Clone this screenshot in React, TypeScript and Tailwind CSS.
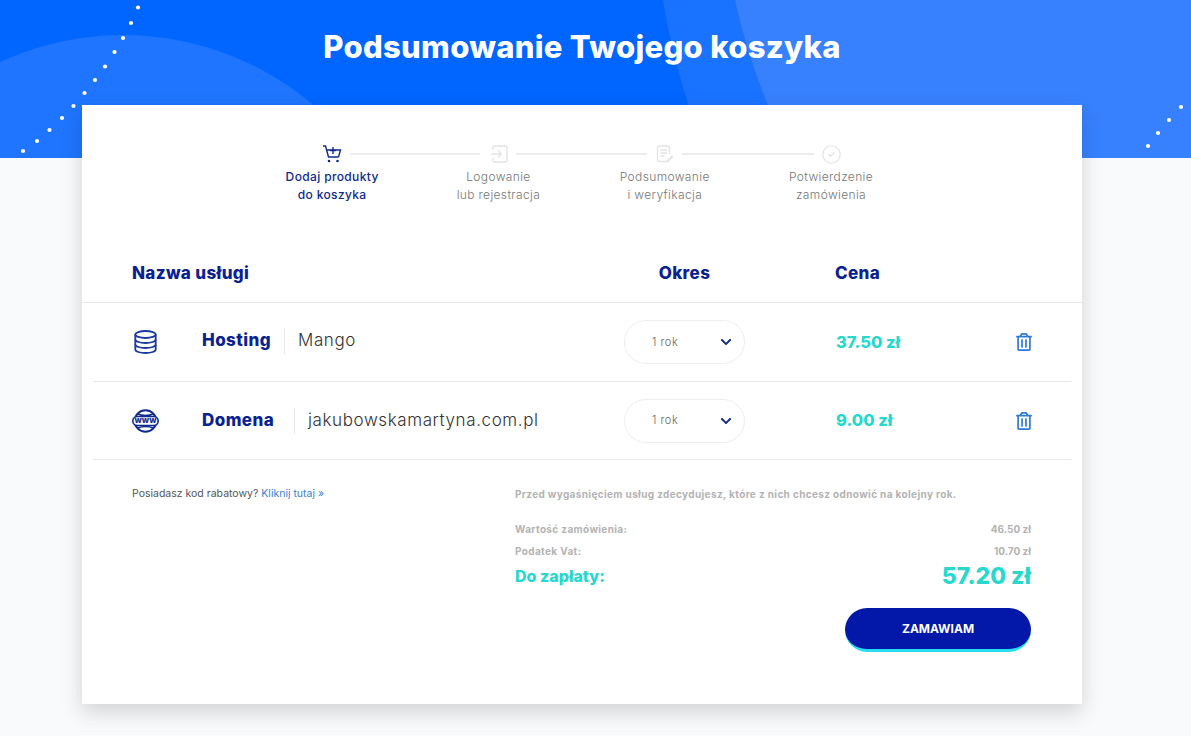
import { CircleCheck } from "lucide-react";
import { FaChevronDown, FaRegTrashAlt } from "react-icons/fa";

const font = "font-['Inter','Liberation_Sans',sans-serif]";

function CartIcon() {
  return (
    <svg width="20" height="18" viewBox="0 0 20 18" fill="none" stroke="#0f2a8c" strokeWidth="1.400">
      <path d="M1 1h2.500l3 11h10" />
      <path d="M4.500 5h14l-2 7" />
      <path d="M11 2v7M8 5.500h6" />
      <circle cx="7" cy="16" r="1.300" fill="#0f2a8c" stroke="none" />
      <circle cx="15.500" cy="16" r="1.300" fill="#0f2a8c" stroke="none" />
    </svg>
  );
}

function LoginIcon() {
  return (
    <svg width="18" height="18" viewBox="0 0 18 18" fill="none" stroke="#e3e4e6" strokeWidth="1.400">
      <path d="M3 5V2.500A1.500 1.500 0 0 1 4.500 1h11A1.500 1.500 0 0 1 17 2.500v13a1.500 1.500 0 0 1-1.500 1.500h-11A1.500 1.500 0 0 1 3 15.500V13" />
      <path d="M1 9h10M8 5.500 11.500 9 8 12.500" />
    </svg>
  );
}

function DocIcon() {
  return (
    <svg width="18" height="18" viewBox="0 0 18 18" fill="none" stroke="#e3e4e6" strokeWidth="1.400">
      <path d="M12 16.500H3A1.500 1.500 0 0 1 1.500 15V2.500A1.500 1.500 0 0 1 3 1h9a1.500 1.500 0 0 1 1.500 1.500V9" />
      <path d="M4.500 5h6.500M4.500 8h6.500M4.500 11h4" />
      <path d="M11.500 16.500 16.500 11" strokeWidth="2.400" />
    </svg>
  );
}

function DbIcon() {
  return (
    <svg className="ml-[2px]" width="23" height="24" viewBox="0 0 23 24" fill="none" stroke="#1c3a9e" strokeWidth="1.800">
      <ellipse cx="11.500" cy="4.500" rx="10.200" ry="3.500" />
      <path d="M1.300 4.500v15c0 2 4.600 3.500 10.200 3.500s10.200-1.500 10.200-3.500v-15" />
      <path d="M1.300 9.500c0 2 4.600 3.500 10.200 3.500s10.200-1.500 10.200-3.500" />
      <path d="M1.300 14.500c0 2 4.600 3.500 10.200 3.500s10.200-1.500 10.200-3.500" />
    </svg>
  );
}

function WwwIcon() {
  return (
    <div className="relative h-[24px] w-[27px]">
      <svg width="27" height="24" viewBox="0 0 27 24" fill="none" stroke="#0f2a8c" strokeWidth="2">
        <circle cx="13.500" cy="12" r="10.800" />
        <path d="M6 5c4 2 11 2 15 0M6 19c4-2 11-2 15 0" strokeWidth="1.400" />
        <rect x="0.800" y="7.500" width="25.400" height="9" rx="4.500" fill="#ffffff" strokeWidth="1.600" />
      </svg>
      <span className="absolute inset-0 flex items-center justify-center text-[8.500px] font-extrabold text-[#0f2a8c]">
        www
      </span>
    </div>
  );
}

const steps = [
  { lines: ["Dodaj produkty", "do koszyka"], active: true },
  { lines: ["Logowanie", "lub rejestracja"], active: false },
  { lines: ["Podsumowanie", "i weryfikacja"], active: false },
  { lines: ["Potwierdzenie", "zamówienia"], active: false },
];

const rows = [
  { icon: <DbIcon />, name: "Hosting", nameWidth: "w-[82px]", value: "Mango", price: "37.50 zł", height: "h-[79px]", nudge: "mb-[3px]" },
  { icon: <WwwIcon />, name: "Domena", nameWidth: "w-[92px]", value: "jakubowskamartyna.com.pl", price: "9.00 zł", height: "h-[78px]", nudge: "mb-0" },
];

function Line({ width }: { width: string }) {
  return <div className={`h-[2px] bg-[#ececec] ${width}`} />;
}

export default function App() {
  return (
    <div className={`relative min-h-[736px] overflow-hidden bg-[#f8fafc] ${font}`}>
      {/* header background */}
      <div className="absolute inset-x-0 top-0 h-[158px] overflow-hidden bg-[#0066ff]">
        <svg className="absolute inset-0" width="1191" height="158" viewBox="0 0 1191 158" fill="none">
          <circle cx="123" cy="329" r="294" fill="#1f75ff" />
          <path d="M663 0Q672 55 690 110L690 158H1191V0Z" fill="#1a73ff" />
          <path d="M735 0Q747 55 770 110L770 158H1191V0Z" fill="#3781ff" />
          {[
            [138, 7.500], [131, 23], [123, 38], [114.500, 52], [105, 66.500], [95, 80],
            [84.500, 93], [73.500, 106], [62, 118], [49.500, 130], [37, 141], [23, 151],
            [1148, 146], [1158, 133], [1169, 120], [1181, 107],
          ].map(([cx, cy]) => (
            <circle key={`${cx}-${cy}`} cx={cx} cy={cy} r="2.100" fill="#ffffff" />
          ))}
        </svg>
      </div>

      <div className="relative flex w-[1164px] flex-col items-center">
        <h1 className="h-[105px] pt-[26px] text-[31px] leading-[42px] font-extrabold tracking-[0.01em] text-white">
          Podsumowanie Twojego koszyka
        </h1>

        <div className="mb-[32px] h-[599px] w-[1000px] bg-white shadow-[0_8px_20px_rgba(0,0,0,0.16)]">
          {/* steps */}
          <div className="mt-[40px] flex h-[18px] items-center pl-[240px]">
            <CartIcon />
            <div className="w-[8px]" />
            <Line width="w-[130px]" />
            <div className="w-[10px]" />
            <LoginIcon />
            <div className="w-[8px]" />
            <Line width="w-[131px]" />
            <div className="w-[9px]" />
            <DocIcon />
            <div className="w-[8px]" />
            <Line width="w-[132px]" />
            <div className="w-[7px]" />
            <CircleCheck size={21} strokeWidth={1.400} color="#e3e4e6" />
          </div>
          <div className="mt-[5px] flex pl-[167px]">
            {steps.map((step) => (
              <div
                key={step.lines[0]}
                className={`w-[166.300px] text-center text-[12px] leading-[18px] tracking-[0.03em] ${
                  step.active ? "font-medium text-[#0f2a8c]" : "font-light text-[#777777]"
                }`}
              >
                <div>{step.lines[0]}</div>
                <div>{step.lines[1]}</div>
              </div>
            ))}
          </div>

          {/* table head */}
          <div className="mt-[41px] grid h-[58px] grid-cols-[492px_121px_90px_auto] items-center border-b border-[#e8e8e8] pl-[50px] text-[17px] font-extrabold tracking-[0.02em] text-[#0a2291]">
            <div>Nazwa usługi</div>
            <div className="text-center">Okres</div>
            <div />
            <div>Cena</div>
          </div>

          {/* rows */}
          {rows.map((row) => (
            <div
              key={row.name}
              className={`mx-[11px] grid grid-cols-[70px_422px_212px_179px_auto] items-center border-b border-[#e8e8e8] pl-[39px] ${row.height}`}
            >
              <div>{row.icon}</div>
              <div className={`flex items-center ${row.nudge}`}>
                <span className={`text-[17px] font-extrabold tracking-[0.025em] text-[#0a2291] ${row.nameWidth}`}>{row.name}</span>
                <span className="mr-[13px] h-[26px] w-px bg-[#e8e8e8]" />
                <span className="text-[17px] font-light tracking-[0.035em] text-[#333333]">{row.value}</span>
              </div>
              <div className="flex h-[44px] w-[121px] items-center justify-between rounded-full border border-[#eeeeee] pr-[12px] pl-[27px] text-[11px] font-light tracking-[0.05em] text-[#666666]">
                <span>1 rok</span>
                <FaChevronDown size={12} color="#0f2a8c" />
              </div>
              <div className="text-[16.500px] font-extrabold text-[#28d8cd]">{row.price}</div>
              <FaRegTrashAlt size={18} color="#2f7ad9" />
            </div>
          ))}

          {/* summary */}
          <div className="flex pt-[27px] pr-[51px] pl-[50px]">
            <div className="w-[383px] text-[10.500px] leading-[14px] text-[#555555]">
              Posiadasz kod rabatowy? <span className="text-[#3b7fd4]">Kliknij tutaj »</span>
            </div>
            <div className="flex-1">
              <p className="text-[10px] leading-[14px] font-bold tracking-[0.036em] text-[#b3b3b3]">
                Przed wygaśnięciem usług zdecydujesz, które z nich chcesz odnowić na kolejny rok.
              </p>
              <div className="mt-[17px] flex h-[22px] items-center justify-between text-[10px] font-bold text-[#b3b3b3]">
                <span className="tracking-[0.036em]">Wartość zamówienia:</span>
                <span>46.50 zł</span>
              </div>
              <div className="flex h-[22px] items-center justify-between text-[10px] font-bold text-[#b3b3b3]">
                <span className="tracking-[0.036em]">Podatek Vat:</span>
                <span>10.70 zł</span>
              </div>
              <div className="flex h-[28px] items-center justify-between font-extrabold text-[#28d8cd]">
                <span className="text-[16px]">Do zapłaty:</span>
                <span className="text-[23px]">57.20 zł</span>
              </div>
              <div className="mt-[18px] flex justify-end">
                <button className="h-[44px] w-[186px] rounded-full border-b-[3px] border-[#27dcf0] bg-[#0318a8] text-[12px] font-bold text-white">
                  ZAMAWIAM
                </button>
              </div>
            </div>
          </div>
        </div>
      </div>
    </div>
  );
}
